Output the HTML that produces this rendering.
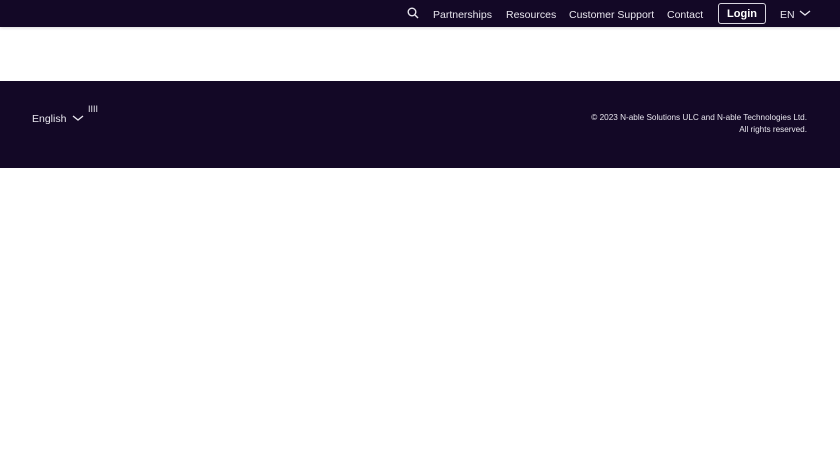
<!DOCTYPE html>
<html><head><meta charset="utf-8"><style>
*{margin:0;padding:0;box-sizing:border-box}
body{width:840px;height:472px;background:#fff;font-family:"Liberation Sans",sans-serif;position:relative;overflow:hidden}
.hdr{position:absolute;left:0;top:0;width:840px;height:27px;background:#130826;box-shadow:0 1px 3px rgba(0,0,0,.15)}
.t{position:absolute;color:#e8e6ee;font-size:10.5px;white-space:nowrap;line-height:14px}
.ft{position:absolute;left:0;top:81px;width:840px;height:87px;background:#130826}
.login{position:absolute;left:718px;top:3px;width:48px;height:21px;border:1px solid #d8d6e0;border-radius:3px;color:#fff;font-weight:bold;font-size:11px;text-align:center;line-height:20px}
</style></head><body>
<div class="hdr">
<svg style="position:absolute;left:407px;top:7px" width="12" height="12" viewBox="0 0 12 12"><circle cx="5" cy="5" r="3.8" fill="none" stroke="#e8e6ee" stroke-width="1.4"/><path d="M8 8l3 3" stroke="#e8e6ee" stroke-width="1.4"/></svg>
<span class="t" style="left:433px;top:8px">Partnerships</span>
<span class="t" style="left:506px;top:8px">Resources</span>
<span class="t" style="left:569px;top:8px">Customer Support</span>
<span class="t" style="left:667px;top:8px">Contact</span>
<div class="login">Login</div>
<span class="t" style="left:780px;top:8px">EN</span>
<svg style="position:absolute;left:799px;top:9px" width="12" height="8" viewBox="0 0 12 8"><path d="M1 2l5 4 5-4" fill="none" stroke="#e8e6ee" stroke-width="1.3"/></svg>
</div>
<div class="ft">
<span class="t" style="left:32px;top:31px">English</span>
<svg style="position:absolute;left:72px;top:33px" width="12" height="8" viewBox="0 0 12 8"><path d="M1 2l5 4 5-4" fill="none" stroke="#e8e6ee" stroke-width="1.3"/></svg>
<span class="t" style="left:88px;top:21px;font-size:9px">IIII</span>
<span class="t" style="right:33px;top:31px;font-size:8.2px;text-align:right;line-height:12px">© 2023 N-able Solutions ULC and N-able Technologies Ltd.<br>All rights reserved.</span>
</div>
</body></html>
